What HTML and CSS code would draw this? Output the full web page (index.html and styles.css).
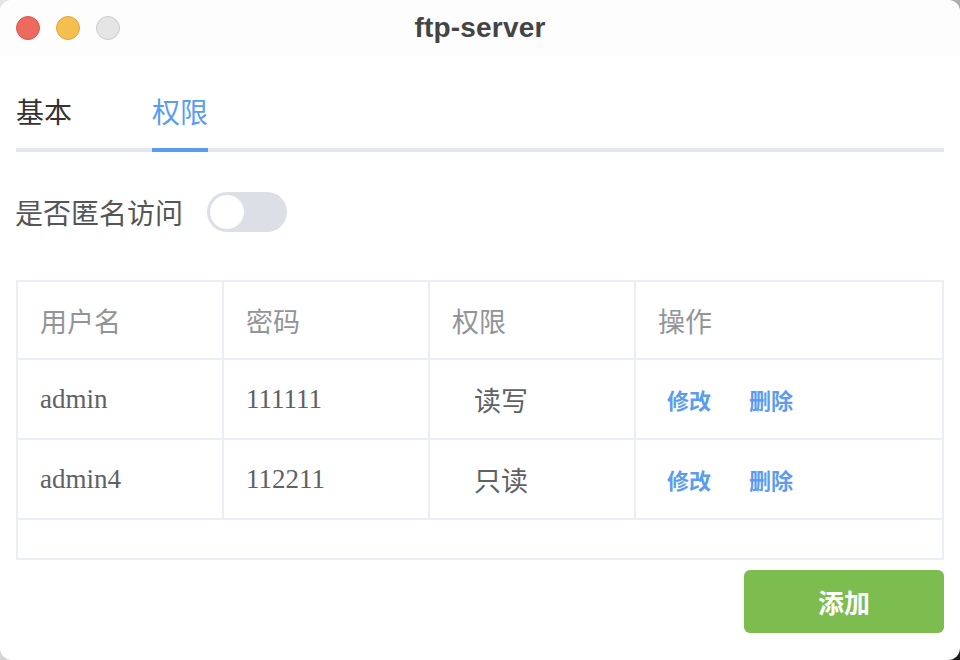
FILE: index.html
```html
<!DOCTYPE html>
<html lang="zh-CN">
<head>
<meta charset="utf-8">
<title>ftp-server</title>
<link rel="stylesheet" href="styles.css">
</head>
<body>
<div class="window">
  <div class="titlebar">
    <div class="lights">
      <span class="light red"></span>
      <span class="light yellow"></span>
      <span class="light gray"></span>
    </div>
    <div class="title">ftp-server</div>
    <div></div>
  </div>
  <div class="content">
    <div class="tabs">
      <div class="tab">基本</div>
      <div class="tab active">权限</div>
    </div>
    <div class="anon-row">
      <span class="anon-label">是否匿名访问</span>
      <span class="switch"><span class="knob"></span></span>
    </div>
    <table class="users">
      <colgroup>
        <col class="c1"><col class="c2"><col class="c3"><col class="c4">
      </colgroup>
      <thead>
        <tr><th>用户名</th><th>密码</th><th>权限</th><th>操作</th></tr>
      </thead>
      <tbody>
        <tr>
          <td>admin</td><td>111111</td><td><span class="perm">读写</span></td>
          <td><a class="act">修改</a><a class="act">删除</a></td>
        </tr>
        <tr>
          <td>admin4</td><td>112211</td><td><span class="perm">只读</span></td>
          <td><a class="act">修改</a><a class="act">删除</a></td>
        </tr>
        <tr class="empty"><td colspan="4"></td></tr>
      </tbody>
    </table>
    <div class="actions">
      <button class="add-btn">添加</button>
    </div>
  </div>
</div>
</body>
</html>
```

FILE: styles.css
```css
html, body {
  margin: 0;
  padding: 0;
}
body {
  width: 960px;
  height: 660px;
  background: linear-gradient(135deg, #e6e6e6 0%, #d0d0d0 50%, #1a1a1a 100%);
  font-family: "Liberation Sans", "Noto Sans CJK SC", sans-serif;
  overflow: hidden;
}
.window {
  width: 960px;
  height: 660px;
  background: #fff;
  border-radius: 12px;
  overflow: hidden;
  display: flex;
  flex-direction: column;
}
.titlebar {
  height: 56px;
  display: grid;
  grid-template-columns: 1fr auto 1fr;
  align-items: center;
  background: #fdfdfd;
}
.lights {
  display: flex;
  gap: 16px;
  padding-left: 16px;
}
.light {
  width: 24px;
  height: 24px;
  border-radius: 50%;
  box-sizing: border-box;
}
.light.red { background: #ee6a5f; border: 1px solid #d9564b; }
.light.yellow { background: #f5bf4f; border: 1px solid #dea63a; }
.light.gray { background: #e5e5e5; border: 1px solid #cdcdcd; }
.title {
  font-family: "Liberation Sans", sans-serif;
  font-weight: bold;
  font-size: 28px;
  color: #444;
  letter-spacing: 0.2px;
}
.content {
  padding: 0 16px;
  display: flex;
  flex-direction: column;
}
.tabs {
  margin-top: 38px;
  display: flex;
  gap: 80px;
  border-bottom: 4px solid #e4e7ed;
}
.tab {
  font-family: "Liberation Serif", "Noto Sans CJK SC", serif;
  font-size: 28px;
  line-height: 40px;
  padding-bottom: 14px;
  color: #333;
  margin-bottom: -4px;
  border-bottom: 4px solid transparent;
}
.tab.active {
  color: #5a9cf0;
  border-bottom-color: #5a9cf0;
}
.anon-row {
  margin-top: 40px;
  display: flex;
  align-items: center;
  gap: 24px;
  height: 40px;
}
.anon-label {
  font-family: "Liberation Serif", "Noto Sans CJK SC", serif;
  font-size: 28px;
  color: #555;
  margin-left: -1px;
}
.switch {
  width: 80px;
  height: 40px;
  border-radius: 20px;
  background: #dcdfe6;
  display: flex;
  align-items: center;
  padding-left: 3px;
  box-sizing: border-box;
}
.knob {
  width: 34px;
  height: 34px;
  border-radius: 50%;
  background: #fff;
}
.users {
  margin-top: 48px;
  width: 928px;
  border-collapse: collapse;
  table-layout: fixed;
  border: 2px solid #ebeef5;
}
.users col.c1, .users col.c2, .users col.c3 { width: 206px; }
.users th, .users td {
  border: 2px solid #ebeef5;
  height: 78px;
  padding: 0 0 0 22px;
  text-align: left;
  vertical-align: middle;
}
.users th {
  height: 76px;
  font-family: "Noto Sans CJK SC", sans-serif;
  font-weight: normal;
  font-size: 27px;
  color: #929499;
}
.users td {
  font-family: "Liberation Serif", "Noto Sans CJK SC", serif;
  font-size: 27px;
  color: #5f6166;
}
.users tr.empty td {
  height: 38px;
}
.perm {
  margin-left: 22px;
}
.act {
  font-family: "Noto Sans CJK SC", sans-serif;
  font-weight: bold;
  font-size: 22px;
  color: #5a9cf0;
  margin-left: 9px;
  margin-right: 29px;
}
.actions {
  display: flex;
  justify-content: flex-end;
  margin-top: 10px;
}
.add-btn {
  width: 200px;
  height: 63px;
  border: none;
  border-radius: 6px;
  background: #7dbd50;
  color: #fff;
  font-family: "Noto Sans CJK SC", sans-serif;
  font-weight: bold;
  font-size: 26px;
  padding: 0;
}
```
